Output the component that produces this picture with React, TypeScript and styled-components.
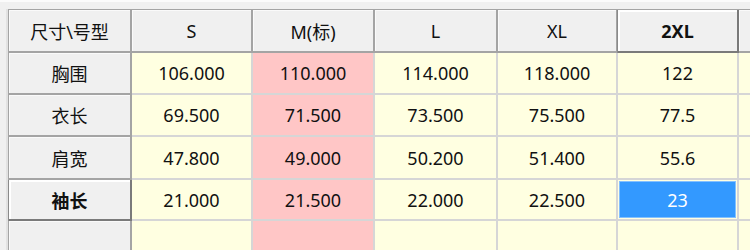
import { Fragment } from 'react';
import styled, { createGlobalStyle } from 'styled-components';

const GlobalStyle = createGlobalStyle`
  html, body {
    margin: 0;
    padding: 0;
    background: #f0f0f0;
    width: 750px;
    height: 250px;
    overflow: hidden;
  }
`;

const Frame = styled.div`
  width: 750px;
  height: 250px;
  box-sizing: border-box;
  padding: 7px 0 0 6px;
  border-top: 2px solid #fbfbfb;
  overflow: hidden;
  font-family: 'Noto Sans', 'Noto Sans CJK SC', sans-serif;
  font-size: 18px;
  color: #111111;
`;

const Inner = styled.div`
  border-left: 2px solid #e2e2e2;
  overflow: hidden;
  height: 100%;
`;

const Grid = styled.div`
  display: grid;
  grid-template-columns: 123px 121px 122px 123px 120px 121px 121px;
  grid-template-rows: 43px 42px 42px 43px 41px 42px;
  width: max-content;
  border-top: 1px solid #a4a4a4;
  border-left: 1px solid #a4a4a4;
`;

const HeadCell = styled.div<{ $active?: boolean }>`
  box-sizing: border-box;
  display: flex;
  align-items: center;
  justify-content: center;
  background: #f0f0f0;
  border-right: 2px solid ${(p) => (p.$active ? '#7a7a7a' : '#a4a4a4')};
  border-bottom: 2px solid ${(p) => (p.$active ? '#7a7a7a' : '#a4a4a4')};
  box-shadow: ${(p) =>
    p.$active ? 'inset 2px 2px 0 #ffffff, -1px 0 0 #8a8a8a' : 'inset 1px 1px 0 #fafafa'};
  font-weight: ${(p) => (p.$active ? 700 : 400)};
  white-space: nowrap;
`;

const DataCell = styled.div<{ $tone: 'yellow' | 'pink' }>`
  box-sizing: border-box;
  display: flex;
  align-items: center;
  justify-content: center;
  background: ${(p) => (p.$tone === 'pink' ? '#ffc6c6' : '#ffffe1')};
  border-right: 2px solid #d6d6d6;
  border-bottom: 2px solid #d6d6d6;
  position: relative;
`;

// highlighted editing cell, drawn over the yellow cell
const Selection = styled.div`
  position: absolute;
  inset: 1px;
  background: #3399ff;
  border: 1px solid #84c0ff;
  color: #ffffff;
  display: flex;
  align-items: center;
  justify-content: center;
`;

const sizes = ['S', 'M(标)', 'L', 'XL', '2XL', ''];

const rows: { label: string; values: string[] }[] = [
  { label: '胸围', values: ['106.000', '110.000', '114.000', '118.000', '122', ''] },
  { label: '衣长', values: ['69.500', '71.500', '73.500', '75.500', '77.5', ''] },
  { label: '肩宽', values: ['47.800', '49.000', '50.200', '51.400', '55.6', ''] },
  { label: '袖长', values: ['21.000', '21.500', '22.000', '22.500', '23', ''] },
  { label: '', values: ['', '', '', '', '', ''] },
];

const activeRow = 3;
const activeCol = 4;

export default function App() {
  return (
    <>
      <GlobalStyle />
      <Frame>
        <Inner>
          <Grid>
            <HeadCell>尺寸\号型</HeadCell>
            {sizes.map((s, i) => (
              <HeadCell key={'h' + i} $active={i === activeCol}>
                {s}
              </HeadCell>
            ))}
            {rows.map((r, ri) => (
              <Fragment key={'r' + ri}>
                <HeadCell $active={ri === activeRow}>{r.label}</HeadCell>
                {r.values.map((v, ci) => (
                  <DataCell key={ci} $tone={ci === 1 ? 'pink' : 'yellow'}>
                    {ri === activeRow && ci === activeCol ? <Selection>{v}</Selection> : v}
                  </DataCell>
                ))}
              </Fragment>
            ))}
          </Grid>
        </Inner>
      </Frame>
    </>
  );
}
